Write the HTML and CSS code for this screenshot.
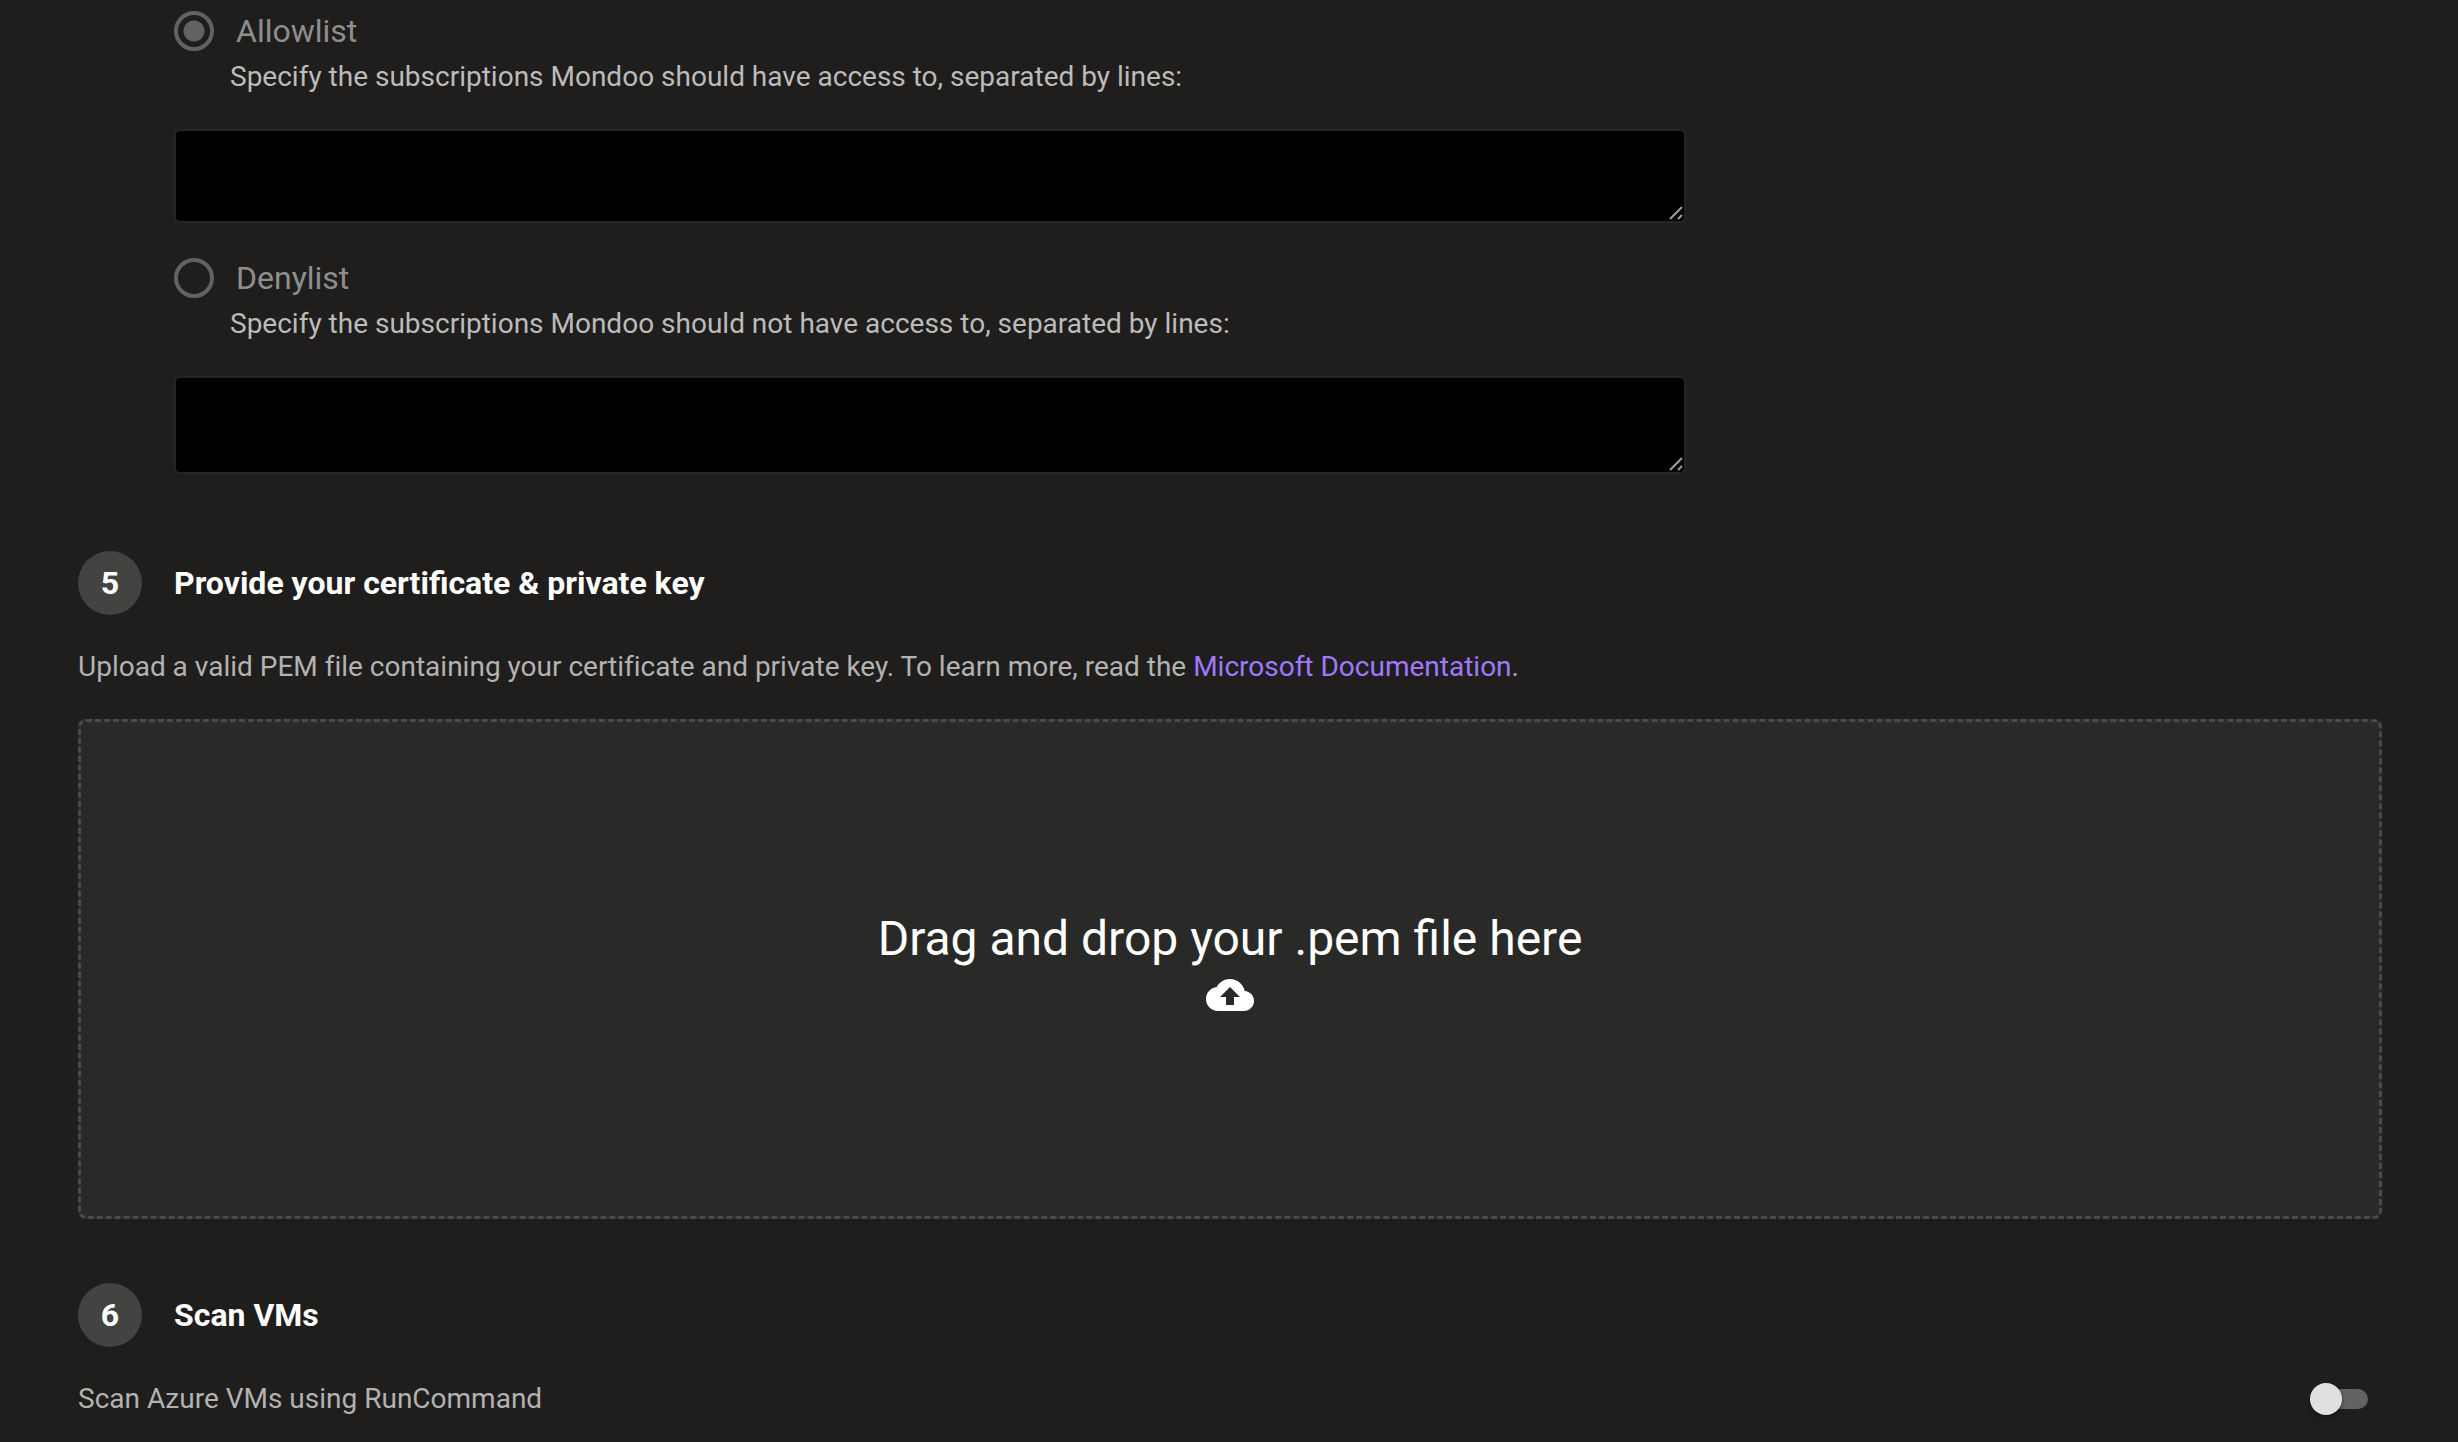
FILE: index.html
```html
<!DOCTYPE html>
<html lang="en">
<head>
  <meta charset="utf-8">
  <meta name="viewport" content="width=device-width, initial-scale=1">
  <title>Azure integration</title>
  <link rel="stylesheet" href="styles.css">
</head>
<body>
  <main class="page">
    <form class="form">
      <fieldset class="filters">
        <div class="filter">
          <label class="choice"><input class="radio" type="radio" name="filter" value="allow" checked>Allowlist</label>
          <label class="hint" for="allowlist">Specify the subscriptions Mondoo should have access to, separated by lines:</label>
          <textarea class="list" id="allowlist"></textarea>
        </div>
        <div class="filter">
          <label class="choice"><input class="radio" type="radio" name="filter" value="deny">Denylist</label>
          <label class="hint" for="denylist">Specify the subscriptions Mondoo should not have access to, separated by lines:</label>
          <textarea class="list list-tall" id="denylist"></textarea>
        </div>
      </fieldset>

      <section class="step">
        <header class="step-header">
          <span class="step-number">5</span>
          <h2 class="step-title">Provide your certificate &amp; private key</h2>
        </header>
        <p class="text">Upload a valid PEM file containing your certificate and private key. To learn more, read the <a class="link" href="#">Microsoft Documentation</a>.</p>
        <button class="dropzone" type="button">
          <span>Drag and drop your .pem file here</span>
          <svg class="cloud" viewBox="0 0 24 24" aria-hidden="true"><path fill="currentColor" d="M19.35 10.04C18.67 6.59 15.64 4 12 4 9.11 4 6.6 5.64 5.35 8.04 2.34 8.36 0 10.91 0 14c0 3.31 2.69 6 6 6h13c2.76 0 5-2.24 5-5 0-2.64-2.05-4.78-4.65-4.96zM14 13v4h-4v-4H7l5-5 5 5h-3z"/></svg>
        </button>
      </section>

      <section class="step">
        <header class="step-header">
          <span class="step-number">6</span>
          <h2 class="step-title">Scan VMs</h2>
        </header>
        <div class="setting">
          <label class="text" for="scan-vms">Scan Azure VMs using RunCommand</label>
          <input class="switch" id="scan-vms" type="checkbox" role="switch">
        </div>
      </section>
    </form>
  </main>
</body>
</html>
```
FILE: styles.css
```css
* {
  box-sizing: border-box;
}

body {
  margin: 0;
  background: #1f1e1c;
  color: #fff;
  font-family: Roboto, sans-serif;
  font-size: 28px;
  line-height: 40px;
}

.page {
  padding: 8px 76px 0 78px;
}

.filters {
  display: flex;
  flex-direction: column;
  gap: 32px;
  margin: 0 0 77px 96px;
  padding: 0;
  border: 0;
}

.filter {
  display: flex;
  flex-direction: column;
  align-items: flex-start;
}

.choice {
  display: flex;
  align-items: center;
  gap: 22px;
  height: 46px;
  color: #8f8e8e;
  font-size: 32px;
}

.radio {
  appearance: none;
  width: 40px;
  height: 40px;
  margin: 0;
  border: 4px solid #626262;
  border-radius: 50%;
}

.radio:checked {
  background: radial-gradient(circle, #626262 10px, transparent 11px);
}

.hint {
  margin: 3px 0 32px 56px;
  color: #bcbbbb;
}

.list {
  display: block;
  width: 1512px;
  max-width: 100%;
  height: 94px;
  border: 2px solid #252525;
  border-radius: 6px;
  background: #000;
  color: #fff;
  font: inherit;
  resize: vertical;
}

.list::-webkit-resizer {
  background: url("data:image/svg+xml,%3Csvg xmlns='http://www.w3.org/2000/svg' viewBox='0 0 15 15'%3E%3Cpath d='M1 13 13 1M9 13l4-4' stroke='%23a0a0a0' stroke-width='2'/%3E%3C/svg%3E") right bottom / 15px 15px no-repeat;
}

.list-tall {
  height: 98px;
}

.step {
  margin-bottom: 64px;
}

.step-header {
  display: flex;
  align-items: center;
  gap: 32px;
  margin-bottom: 32px;
}

.step-number {
  display: grid;
  place-items: center;
  width: 64px;
  height: 64px;
  border-radius: 50%;
  background: #434342;
  font-size: 32px;
  font-weight: 700;
}

.step-title {
  margin: 0;
  font-size: 32px;
  font-weight: 700;
}

.text {
  margin: 0;
  color: #b3b2b2;
  font-variant-ligatures: none;
}

.link {
  color: #a078ff;
  text-decoration: none;
}

.dropzone {
  display: flex;
  flex-direction: column;
  align-items: center;
  justify-content: center;
  width: 100%;
  height: 500px;
  margin-top: 32px;
  padding: 0 0 12px;
  border: 3px dashed #4a4a49;
  border-radius: 8px;
  background: #292928;
  color: #fff;
  font: inherit;
  font-size: 48px;
  line-height: 64px;
}

.cloud {
  width: 48px;
  height: 48px;
}

.setting {
  display: flex;
  align-items: center;
  justify-content: space-between;
}

.switch {
  appearance: none;
  display: grid;
  align-items: center;
  width: 58px;
  height: 32px;
  margin: 0 14px 0 0;
}

.switch::before,
.switch::after {
  content: "";
  grid-area: 1 / 1;
}

.switch::before {
  height: 20px;
  margin-left: 6px;
  border-radius: 10px;
  background: #626262;
}

.switch::after {
  width: 32px;
  height: 32px;
  border-radius: 50%;
  background: #e0e0e0;
  box-shadow: 0 2px 4px rgb(0 0 0 / 40%);
}

.switch:checked::after {
  margin-left: auto;
}
```
